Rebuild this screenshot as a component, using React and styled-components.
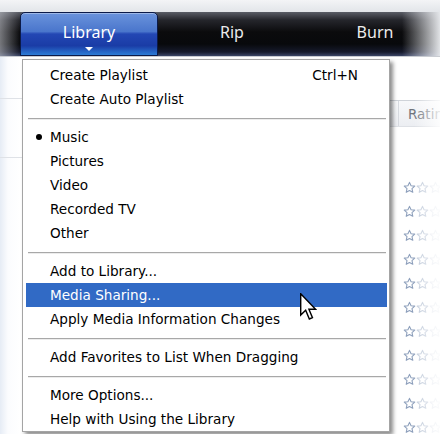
import React from 'react';
import styled, { createGlobalStyle } from 'styled-components';

const GlobalStyle = createGlobalStyle`
  html, body {
    margin: 0;
    padding: 0;
    background: #ffffff;
  }
  #root {
    width: 440px;
    height: 434px;
  }
`;

const Page = styled.div`
  position: relative;
  width: 440px;
  height: 434px;
  overflow: hidden;
  background: #ffffff;
  display: flex;
  flex-direction: column;
`;

const TopStrip = styled.div`
  flex-shrink: 0;
  height: 12px;
  background: linear-gradient(#f3f4f6, #e2e5e9);
`;

const NavBar = styled.div`
  position: relative;
  flex-shrink: 0;
  height: 44px;
  display: flex;
  gap: 5px;
  padding-left: 20px;
  background: linear-gradient(
    #5a5d66 0px,
    #25262c 8px,
    #0b0b0d 20px,
    #08090c 32px,
    #161a2c 40px,
    #3b4566 44px
  );

  &::after {
    content: '';
    position: absolute;
    inset: 0;
    pointer-events: none;
    background: linear-gradient(
      to right,
      rgba(190, 192, 198, 0.6) 0px,
      rgba(0, 0, 0, 0) 20px,
      rgba(0, 0, 0, 0) 402px,
      rgba(236, 238, 241, 0.95) 440px
    );
  }
`;

const Tab = styled.div`
  position: relative;
  flex-shrink: 0;
  width: 138px;
  box-sizing: border-box;
  display: flex;
  align-items: center;
  justify-content: center;
  padding-bottom: 4px;
  font-family: 'Noto Sans', 'Open Sans', sans-serif;
  font-size: 16px;
  color: ${p => (p.active ? '#ffffff' : '#ececec')};
  border-radius: 5px 5px 0 0;
  ${p =>
    p.active &&
    `
    border: 1px solid #0b1a48;
    background: linear-gradient(
      #6a93dc 0%,
      #4a76cc 44%,
      #2347b4 50%,
      #1a3ca6 78%,
      #2c7cd6 100%
    );
    box-shadow: inset 0 1px 0 rgba(255, 255, 255, 0.35);
  `}
`;

const Caret = styled.span`
  position: absolute;
  left: 50%;
  bottom: 4px;
  margin-left: -4px;
  width: 0;
  height: 0;
  border-left: 4px solid transparent;
  border-right: 4px solid transparent;
  border-top: 4px solid #ffffff;
`;

const Workspace = styled.div`
  position: relative;
  flex: 1;
  min-height: 0;
  overflow: hidden;
  display: flex;
  border-top: 1px solid #c9ccd2;
`;

const NavPane = styled.div`
  flex-shrink: 0;
  width: 180px;
  background: linear-gradient(to right, #e6ecf5 0px, #fbfcfe 8px, #ffffff 20px);
  display: flex;
  flex-direction: column;
`;

const NavRule = styled.div`
  flex-shrink: 0;
  height: ${p => p.gap}px;
  border-bottom: 1px solid #dfe2e7;
`;

const ListPane = styled.div`
  flex: 1;
  min-width: 0;
  display: flex;
  flex-direction: column;
`;

const AddressBar = styled.div`
  flex-shrink: 0;
  height: 43px;
  border-bottom: 1px solid #cfd3d9;
`;

const HeaderRow = styled.div`
  flex-shrink: 0;
  height: 25px;
  display: grid;
  grid-template-columns: 218px 80px;
  background: linear-gradient(#f7f8fa, #eceef2);
  border-bottom: 1px solid #dde0e5;
`;

const HeaderCell = styled.div`
  display: flex;
  align-items: center;
  padding-left: 9px;
  border-left: 1px solid #d7dae0;
  font-family: 'DejaVu Sans', Verdana, sans-serif;
  font-size: 13.5px;
  color: #6f747c;
`;

const TrackRow = styled.div`
  flex-shrink: 0;
  height: 24px;
  display: grid;
  grid-template-columns: 218px 80px;
`;

const RatingCell = styled.div`
  display: flex;
  align-items: center;
  padding-left: 5px;
`;

const StarIcon = styled.svg`
  width: 13px;
  height: 13px;
  opacity: ${p => p.dim};
`;

const Star = ({ dim = 1 }) => (
  <StarIcon viewBox="0 0 24 24" dim={dim}>
    <path
      d="M12 2.5l2.9 6.3 6.8.7-5.1 4.6 1.5 6.8L12 17.4l-6.1 3.5 1.5-6.8-5.1-4.6 6.8-.7z"
      fill="#ffffff"
      stroke="#8ea0bc"
      strokeWidth="2"
      strokeLinejoin="round"
    />
  </StarIcon>
);

const RightFade = styled.div`
  position: absolute;
  top: 0;
  right: 0;
  bottom: 0;
  width: 26px;
  pointer-events: none;
  background: linear-gradient(to right, rgba(255, 255, 255, 0), rgba(255, 255, 255, 0.85));
`;

const Menu = styled.div`
  position: absolute;
  left: 22px;
  top: 2px;
  width: 368px;
  box-sizing: border-box;
  background: #ffffff;
  border: 1px solid #a4a4a4;
  padding: 3px 2px 0 3px;
  box-shadow: 3px 3px 4px rgba(0, 0, 0, 0.45);
  font-family: 'DejaVu Sans', Verdana, sans-serif;
  font-size: 13.6px;
  color: #000000;
`;

const MenuItem = styled.div`
  position: relative;
  height: 24px;
  display: flex;
  align-items: center;
  justify-content: space-between;
  padding: 0 29px 0 24px;
  background: ${p => (p.highlighted ? '#316ac5' : 'transparent')};
  color: ${p => (p.highlighted ? '#ffffff' : '#000000')};
  white-space: nowrap;
`;

const Bullet = styled.span`
  position: absolute;
  left: 10px;
  top: 50%;
  margin-top: -3px;
  width: 6px;
  height: 6px;
  border-radius: 50%;
  background: #000000;
`;

const Separator = styled.div`
  height: 14px;
  display: flex;
  align-items: center;
  padding: 0 1px 0 2px;

  &::before {
    content: '';
    flex: 1;
    height: 1px;
    background: #a8a8a8;
    box-shadow: 0 1px 0 #ececec;
  }
`;

const Cursor = styled.svg`
  position: absolute;
  left: 300px;
  top: 236px;
  width: 17px;
  height: 27px;
`;

const menu = [
  { label: 'Create Playlist', shortcut: 'Ctrl+N' },
  { label: 'Create Auto Playlist' },
  'sep',
  { label: 'Music', checked: true },
  { label: 'Pictures' },
  { label: 'Video' },
  { label: 'Recorded TV' },
  { label: 'Other' },
  'sep',
  { label: 'Add to Library...' },
  { label: 'Media Sharing...', highlighted: true },
  { label: 'Apply Media Information Changes' },
  'sep',
  { label: 'Add Favorites to List When Dragging' },
  'sep',
  { label: 'More Options...' },
  { label: 'Help with Using the Library' },
];

// rows below the column header; the first two carry no rating
const rows = Array.from({ length: 14 }, (_, i) => i >= 2);

export default function App() {
  return (
    <>
      <GlobalStyle />
      <Page>
        <TopStrip />
        <NavBar>
          <Tab active>
            Library
            <Caret />
          </Tab>
          <Tab>Rip</Tab>
          <Tab>Burn</Tab>
        </NavBar>
        <Workspace>
          <NavPane>
            <NavRule gap={41} />
            <NavRule gap={58} />
          </NavPane>
          <ListPane>
            <AddressBar />
            <HeaderRow>
              <HeaderCell />
              <HeaderCell>Rating</HeaderCell>
            </HeaderRow>
            {rows.map((rated, i) => (
              <TrackRow key={i}>
                <div />
                <RatingCell>
                  {rated && (
                    <>
                      <Star />
                      <Star dim={0.55} />
                      <Star dim={0.25} />
                    </>
                  )}
                </RatingCell>
              </TrackRow>
            ))}
          </ListPane>
          <RightFade />

          <Menu>
            {menu.map((item, i) =>
              item === 'sep' ? (
                <Separator key={i} />
              ) : (
                <MenuItem key={i} highlighted={item.highlighted}>
                  {item.checked && <Bullet />}
                  <span>{item.label}</span>
                  {item.shortcut && <span>{item.shortcut}</span>}
                </MenuItem>
              )
            )}
          </Menu>

          <Cursor viewBox="0 0 12 19">
            <path
              d="M0.5 0.5 L0.5 15.5 L4 12.2 L6.6 18.3 L8.8 17.4 L6.3 11.4 L11 11.4 Z"
              fill="#ffffff"
              stroke="#000000"
              strokeWidth="1"
              strokeLinejoin="miter"
            />
          </Cursor>
        </Workspace>
      </Page>
    </>
  );
}
